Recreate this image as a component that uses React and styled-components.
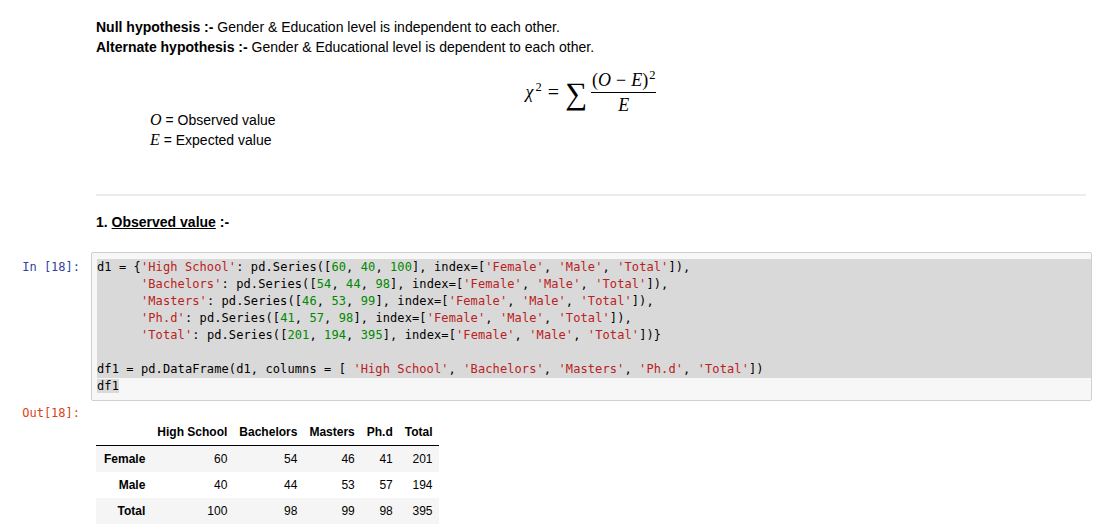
import React from "react";
import styled, { createGlobalStyle } from "styled-components";

const GlobalStyle = createGlobalStyle`
  body {
    margin: 0;
    background: #fff;
    color: #000;
    font-family: "Liberation Sans", Arial, sans-serif;
    font-size: 14px;
  }
`;

const code = [
  "d1 = {'High School': pd.Series([60, 40, 100], index=['Female', 'Male', 'Total']),",
  "      'Bachelors': pd.Series([54, 44, 98], index=['Female', 'Male', 'Total']),",
  "      'Masters': pd.Series([46, 53, 99], index=['Female', 'Male', 'Total']),",
  "      'Ph.d': pd.Series([41, 57, 98], index=['Female', 'Male', 'Total']),",
  "      'Total': pd.Series([201, 194, 395], index=['Female', 'Male', 'Total'])}",
  "",
  "df1 = pd.DataFrame(d1, columns = [ 'High School', 'Bachelors', 'Masters', 'Ph.d', 'Total'])",
];

const columns = ["High School", "Bachelors", "Masters", "Ph.d", "Total"];
const rows = [
  ["Female", 60, 54, 46, 41, 201],
  ["Male", 40, 44, 53, 57, 194],
  ["Total", 100, 98, 99, 98, 395],
];

function tokenize(line) {
  return line.split(/('[^']*'|\b\d+\b)/).map((part, i) => {
    if (part.startsWith("'")) return <Str key={i}>{part}</Str>;
    if (/^\d+$/.test(part)) return <Num key={i}>{part}</Num>;
    return part;
  });
}

export default function App() {
  return (
    <Notebook>
      <GlobalStyle />
      <Markdown>
        <Para>
          <b>Null hypothesis :-</b> Gender &amp; Education level is independent to each other.
        </Para>
        <Para>
          <b>Alternate hypothesis :-</b> Gender &amp; Educational level is dependent to each other.
        </Para>

        <Formula>
          <MathItalic>
            χ<Sup $gap>2</Sup>
          </MathItalic>
          <MathOp>=</MathOp>
          <Sigma>∑</Sigma>
          <Fraction>
            <Numer>
              (<MathItalic>O</MathItalic>
              <MathOp $small>−</MathOp>
              <MathItalic>E</MathItalic>)<Sup>2</Sup>
            </Numer>
            <Denom>
              <MathItalic>E</MathItalic>
            </Denom>
          </Fraction>
        </Formula>

        <Legend>
          <Para>
            <LegendVar>O</LegendVar> = Observed value
          </Para>
          <Para>
            <LegendVar>E</LegendVar> = Expected value
          </Para>
        </Legend>

        <Rule />

        <Heading>
          1. <u>Observed value</u> :-
        </Heading>
      </Markdown>

      <Cell>
        <Prompt $kind="in">In [18]:</Prompt>
        <InputBox>
          {code.map((line, i) => (
            <CodeLine key={i} $selected>
              {line ? tokenize(line) : " "}
            </CodeLine>
          ))}
          <CodeLine>
            <Selection>df1</Selection>
          </CodeLine>
        </InputBox>
      </Cell>

      <Cell $output>
        <Prompt $kind="out">Out[18]:</Prompt>
        <OutputArea>
          <Frame>
            <thead>
              <tr>
                <Th $index />
                {columns.map((c) => (
                  <Th key={c}>{c}</Th>
                ))}
              </tr>
            </thead>
            <tbody>
              {rows.map(([label, ...vals]) => (
                <Row key={label}>
                  <Th $index>{label}</Th>
                  {vals.map((v, i) => (
                    <Td key={i}>{v}</Td>
                  ))}
                </Row>
              ))}
            </tbody>
          </Frame>
        </OutputArea>
      </Cell>
    </Notebook>
  );
}

const Notebook = styled.div`
  padding-top: 17px;
  padding-bottom: 20px;
`;

const Markdown = styled.div`
  padding: 0 16px 0 96px;
`;

const Para = styled.div`
  line-height: 20px;
`;

const Formula = styled.div`
  display: flex;
  justify-content: center;
  align-items: center;
  margin: 14px 0 -4px;
  height: 43px;
  font-family: "Liberation Serif", "Times New Roman", serif;
  font-size: 18px;
`;

const MathItalic = styled.span`
  font-style: italic;
`;

const Sup = styled.sup`
  font-style: normal;
  font-size: 12.5px;
  vertical-align: 7px;
  line-height: 0;
  margin-left: ${(p) => (p.$gap ? "2px" : "1px")};
`;

const MathOp = styled.span`
  margin: 0 ${(p) => (p.$small ? "5px" : "6px")};
  font-size: ${(p) => (p.$small ? "18px" : "20px")};
`;

const Sigma = styled.span`
  font-size: 31px;
  line-height: 1;
  margin-right: 4px;
  position: relative;
  top: 1px;
`;

const Fraction = styled.span`
  display: inline-flex;
  flex-direction: column;
  align-items: center;
`;

const Numer = styled.span`
  line-height: 18px;
  padding: 0 1px 3px;
  border-bottom: 1px solid #000;
`;

const Denom = styled.span`
  line-height: 18px;
  padding-top: 3px;
`;

const Legend = styled.div`
  padding-left: 54px;
`;

const LegendVar = styled.span`
  font-family: "Liberation Serif", "Times New Roman", serif;
  font-style: italic;
  font-size: 16px;
`;

const Rule = styled.div`
  height: 2px;
  background: #ececec;
  margin-top: 44px;
`;

const Heading = styled.div`
  margin-top: 16px;
  line-height: 20px;
  font-weight: bold;
`;

const Cell = styled.div`
  display: flex;
  margin-top: ${(p) => (p.$output ? "3px" : "20px")};
  padding-right: 10px;
`;

const Prompt = styled.div`
  flex: 0 0 91px;
  box-sizing: border-box;
  padding: ${(p) => (p.$kind === "in" ? "7px" : "1px")} 11px 0 0;
  text-align: right;
  font-family: "DejaVu Sans Mono", monospace;
  font-size: 12px;
  line-height: 17px;
  color: ${(p) => (p.$kind === "in" ? "#303f9f" : "#d84315")};
`;

const InputBox = styled.div`
  flex: 1;
  border: 1px solid #cfcfcf;
  border-radius: 2px;
  background: #f7f7f7;
  padding: 6px 0 5px 5px;
  font-family: "DejaVu Sans Mono", monospace;
  font-size: 12px;
  letter-spacing: 0.1px;
  line-height: 17px;
  color: #000;
`;

const CodeLine = styled.div`
  white-space: pre;
  height: 17px;
  background: ${(p) => (p.$selected ? "#d9d9d9" : "transparent")};
`;

const Selection = styled.span`
  background: #d9d9d9;
`;

const Str = styled.span`
  color: #ba2121;
`;

const Num = styled.span`
  color: #008800;
`;

const OutputArea = styled.div`
  flex: 1;
  padding: 15px 0 0 5px;
`;

const Frame = styled.table`
  border-collapse: collapse;
  border-spacing: 0;
  font-size: 12px;
  color: #000;

  thead {
    border-bottom: 1px solid #000;
  }
`;

const Row = styled.tr`
  &:nth-child(odd) {
    background: #f5f5f5;
  }
`;

const Th = styled.th`
  text-align: right;
  padding: ${(p) => (p.$index ? "6px 6px 6px 8px" : "6px")};
  line-height: 14px;
  font-weight: bold;
`;

const Td = styled.td`
  text-align: right;
  padding: 6px;
  line-height: 14px;
`;
